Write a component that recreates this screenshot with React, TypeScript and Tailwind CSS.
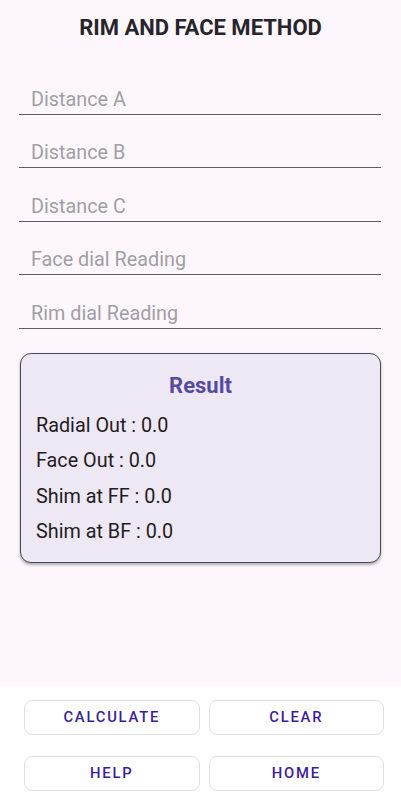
import React from "react";

const fields = ["Distance A", "Distance B", "Distance C", "Face dial Reading", "Rim dial Reading"];
const results = ["Radial Out : 0.0", "Face Out : 0.0", "Shim at FF : 0.0", "Shim at BF : 0.0"];
const buttons = ["CALCULATE", "CLEAR", "HELP", "HOME"];

export default function App() {
  return (
    <div className="h-[800px] w-[401px] flex flex-col bg-white font-['Roboto',sans-serif]">
      <div className="h-[686px] bg-[#fdf7fd]">
        {/* title */}
        <h1 className="pt-[13px] text-center text-[22px] leading-[30px] font-bold text-[#27252b]">
          RIM AND FACE METHOD
        </h1>

        {/* inputs */}
        <div className="mt-[18px] ml-[19px] w-[362px]">
          {fields.map((f) => (
            <div key={f} className="h-[53.6px] flex items-end border-b border-[#5f5c63] pl-[12px] pb-[2px]">
              <span className="text-[19.8px] leading-[24px] text-[#a19ea5]">{f}</span>
            </div>
          ))}
        </div>

        {/* result card */}
        <div className="mt-[24px] ml-[20px] w-[361px] h-[210px] rounded-[11px] border border-[#4a4850] bg-[#eee7f4] shadow-[0_2px_3px_rgba(0,0,0,0.3)] px-[15px] pt-[17px]">
          <div className="text-center text-[22px] leading-[30px] font-bold text-[#564ba0]">Result</div>
          <div className="mt-[7px] flex flex-col">
            {results.map((r) => (
              <div key={r} className="h-[35.5px] flex items-center text-[19.8px] text-[#1f1d22]">
                {r}
              </div>
            ))}
          </div>
        </div>
      </div>

      {/* buttons */}
      <div className="pt-[14px] pl-[24px]">
        <div className="grid w-[360px] grid-cols-2 gap-x-[9px] gap-y-[21px]">
          {buttons.map((b) => (
            <button
              key={b}
              className="h-[35px] rounded-[8px] border border-[#e1dfe3] bg-white text-[14.8px] font-medium tracking-[0.12em] text-[#3e1c99]"
            >
              {b}
            </button>
          ))}
        </div>
      </div>
    </div>
  );
}
